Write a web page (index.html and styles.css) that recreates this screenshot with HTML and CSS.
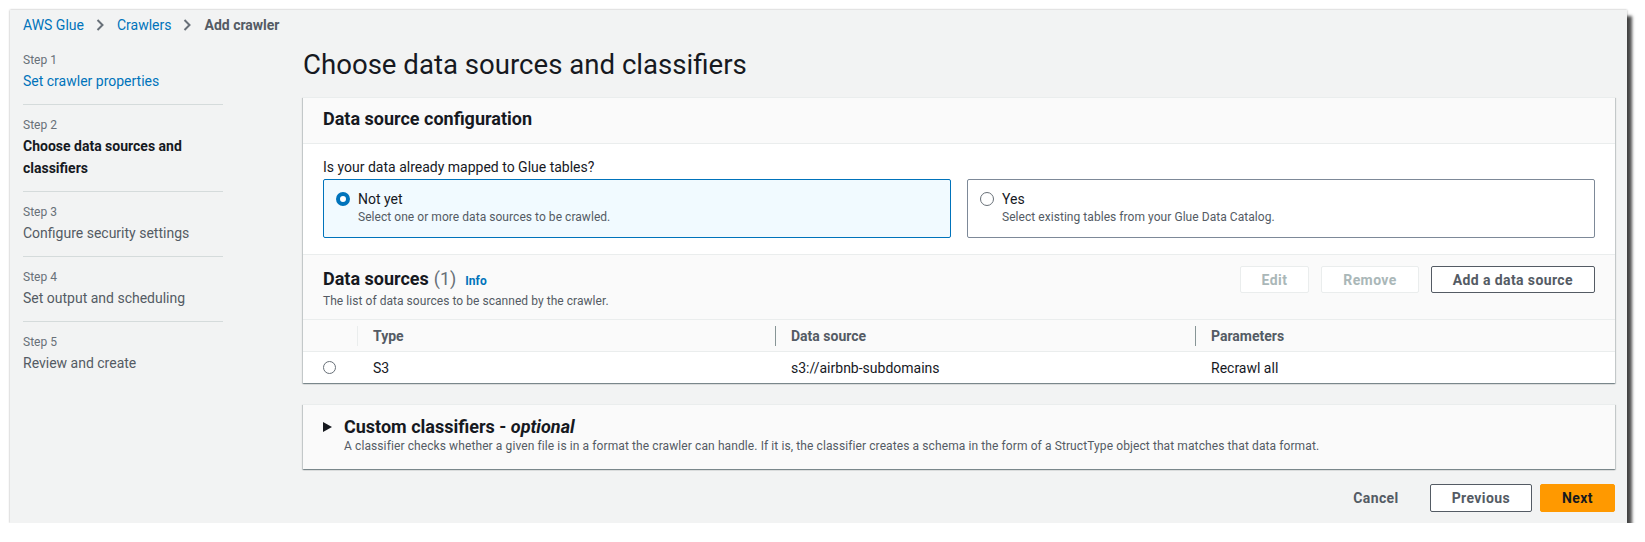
FILE: index.html
```html
<!DOCTYPE html>
<html lang="en">
<head>
<meta charset="utf-8">
<title>Add crawler</title>
<link rel="stylesheet" href="styles.css">
</head>
<body>
<div class="frame">
  <nav class="crumbs">
    <a class="crumb-link">AWS Glue</a>
    <svg class="chev" width="8" height="12" viewBox="0 0 8 12"><path d="M1.5 1l5 5-5 5" fill="none" stroke="#687078" stroke-width="2"/></svg>
    <a class="crumb-link">Crawlers</a>
    <svg class="chev" width="8" height="12" viewBox="0 0 8 12"><path d="M1.5 1l5 5-5 5" fill="none" stroke="#687078" stroke-width="2"/></svg>
    <span class="crumb-current">Add crawler</span>
  </nav>
  <div class="layout">
    <aside class="steps">
      <div class="step">
        <div class="step-label">Step 1</div>
        <a class="step-link">Set crawler properties</a>
      </div>
      <div class="step">
        <div class="step-label">Step 2</div>
        <div class="step-current">Choose data sources and classifiers</div>
      </div>
      <div class="step">
        <div class="step-label">Step 3</div>
        <div class="step-text">Configure security settings</div>
      </div>
      <div class="step">
        <div class="step-label">Step 4</div>
        <div class="step-text">Set output and scheduling</div>
      </div>
      <div class="step last">
        <div class="step-label">Step 5</div>
        <div class="step-text">Review and create</div>
      </div>
    </aside>
    <main class="main">
      <h1 class="title">Choose data sources and classifiers</h1>
      <section class="panel">
        <div class="panel-head">
          <h2 class="panel-title">Data source configuration</h2>
        </div>
        <div class="panel-body">
          <div class="q-label">Is your data already mapped to Glue tables?</div>
          <div class="tiles">
            <div class="tile selected">
              <span class="radio on"></span>
              <div class="tile-text">
                <div class="tile-title">Not yet</div>
                <div class="tile-sub">Select one or more data sources to be crawled.</div>
              </div>
            </div>
            <div class="tile">
              <span class="radio"></span>
              <div class="tile-text">
                <div class="tile-title">Yes</div>
                <div class="tile-sub">Select existing tables from your Glue Data Catalog.</div>
              </div>
            </div>
          </div>
        </div>
        <div class="ds-head">
          <div class="ds-left">
            <div class="ds-title"><span class="ds-name">Data sources</span> <span class="ds-count">(1)</span><a class="info">Info</a></div>
            <div class="ds-sub">The list of data sources to be scanned by the crawler.</div>
          </div>
          <div class="ds-actions">
            <button class="btn disabled">Edit</button>
            <button class="btn disabled">Remove</button>
            <button class="btn">Add a data source</button>
          </div>
        </div>
        <div class="table">
          <div class="th th-sel"></div>
          <div class="th"><span class="sep light"></span><span class="th-text">Type</span></div>
          <div class="th"><span class="sep"></span><span class="th-text">Data source</span></div>
          <div class="th"><span class="sep"></span><span class="th-text">Parameters</span></div>
          <div class="td td-sel"><span class="radio small"></span></div>
          <div class="td">S3</div>
          <div class="td">s3://airbnb-subdomains</div>
          <div class="td">Recrawl all</div>
        </div>
      </section>
      <section class="panel expander">
        <div class="exp-row">
          <svg class="caret" width="9" height="10" viewBox="0 0 9 10"><path d="M0 0L9 5 0 10z" fill="#16191f"/></svg>
          <div class="exp-text">
            <div class="exp-title">Custom classifiers - <em>optional</em></div>
            <div class="exp-sub">A classifier checks whether a given file is in a format the crawler can handle. If it is, the classifier creates a schema in the form of a StructType object that matches that data format.</div>
          </div>
        </div>
      </section>
      <div class="footer">
        <button class="btn link">Cancel</button>
        <button class="btn">Previous</button>
        <button class="btn primary">Next</button>
      </div>
    </main>
  </div>
</div>
</body>
</html>
```

FILE: styles.css
```css
* { box-sizing: border-box; }
html, body { margin: 0; padding: 0; background: #ffffff; }
body { font-family: Roboto, "Liberation Sans", Arial, sans-serif; color: #16191f; font-size: 14px; line-height: 20px; }

.frame {
  margin: 10px 0 0 10px;
  width: 1617px;
  height: 513px;
  background: #f2f3f3;
  padding: 5px 12px 0 13px;
  box-shadow: 0 0 2px rgba(0,0,0,0.35), 5px 6px 3px rgba(0,0,0,0.7);
}

.crumbs { display: flex; align-items: center; height: 20px; font-size: 14px; }
.crumb-link { color: #0073bb; }
.chev { margin: 0 13px 0 12px; }
.crumb-current { color: #545b64; font-weight: 700; }

.layout { display: flex; gap: 80px; }
.steps { width: 200px; flex: none; padding-top: 17px; }
.step { padding: 12px 0; border-bottom: 1px solid #d5dbdb; }
.step:first-child { padding-top: 0; }
.step.last { border-bottom: none; }
.step-label { font-size: 12px; line-height: 16px; color: #687078; margin-bottom: 2px; }
.step-link { display: block; color: #0073bb; font-size: 14px; line-height: 22px; }
.step-current { font-weight: 700; font-size: 14px; line-height: 22px; color: #16191f; }
.step-text { font-size: 14px; line-height: 22px; color: #545b64; }

.main { flex: 1; min-width: 0; }
.title { margin: 12px 0 0; font-size: 27.6px; line-height: 36px; font-weight: 400; color: #16191f; }

.panel {
  background: #ffffff;
  border-top: 1px solid #eaeded;
  box-shadow: 0 1px 1px 0 rgba(0,28,36,0.3), 1px 1px 1px 0 rgba(0,28,36,0.15), -1px 1px 1px 0 rgba(0,28,36,0.15);
  margin-top: 14px;
}
.panel-head { background: #fafafa; padding: 9px 20px 12px; border-bottom: 1px solid #eaeded; }
.panel-title { margin: 0; font-size: 18px; line-height: 24px; font-weight: 700; }
.panel-body { padding: 13px 20px 16px; border-bottom: 1px solid #eaeded; }
.q-label { font-size: 14px; line-height: 21px; margin-bottom: 1px; }
.tiles { display: flex; gap: 16px; }
.tile { flex: 1; display: flex; gap: 8px; border: 1px solid #7d8998; border-radius: 2px; padding: 9px 12px 11px; background: #fff; }
.tile.selected { border-color: #0073bb; background: #f1faff; }
.tile-title { font-size: 14px; line-height: 20px; }
.tile-sub { font-size: 12px; line-height: 17px; color: #545b64; letter-spacing: 0.05px; }
.radio { flex: none; width: 14px; height: 14px; border-radius: 50%; border: 1.5px solid #687078; background: #fff; margin-top: 3px; }
.radio.on { border: 4px solid #0073bb; }
.radio.small { margin-top: 0; width: 13px; height: 13px; }

.ds-head { background: #fafafa; display: flex; justify-content: space-between; align-items: flex-start; padding: 12px 20px 10px; border-bottom: 1px solid #eaeded; }
.ds-title { font-size: 18px; line-height: 24px; display: flex; align-items: baseline; }
.ds-name { font-weight: 700; }
.ds-count { color: #687078; margin-left: 5px; }
.info { color: #0073bb; font-size: 12px; font-weight: 700; margin-left: 9px; }
.ds-sub { font-size: 12px; line-height: 16px; color: #545b64; letter-spacing: 0.05px; }
.ds-actions { display: flex; gap: 12px; margin-top: -1px; }

.btn {
  font-family: Roboto, "Liberation Sans", Arial, sans-serif;
  font-size: 14px; font-weight: 700; line-height: 20px; letter-spacing: 0.4px;
  height: 27px; padding: 0 21px;
  border: 1px solid #545b64; border-radius: 2px;
  background: #fff; color: #545b64;
}
.btn.disabled { border-color: #eaeded; color: #aab7b8; }
.btn.link { border-color: transparent; background: transparent; padding: 0 22px 0 20px; }
.btn.primary { background: #ff9900; border-color: #ff9900; color: #16191f; }

.table { display: grid; grid-template-columns: 54px 418px 420px 1fr; }
.th { background: #fafafa; height: 32px; display: flex; align-items: center; border-bottom: 1px solid #eaeded; font-weight: 700; color: #545b64; }
.sep { width: 1px; height: 20px; background: #879596; }
.sep.light { background: #eaeded; }
.th-text { margin-left: 15px; }
.td { height: 31px; display: flex; align-items: center; padding-left: 16px; color: #16191f; }
.td-sel { padding-left: 20px; }

.expander { background: #fafafa; margin-top: 21px; }
.exp-row { display: flex; padding: 11px 20px 14px; }
.caret { flex: none; margin: 6px 12px 0 0; }
.exp-title { font-size: 18px; line-height: 22px; font-weight: 700; }
.exp-title em { font-weight: 700; }
.exp-sub { font-size: 12px; line-height: 17px; color: #545b64; letter-spacing: 0.1px; }

.footer { display: flex; justify-content: flex-end; gap: 8px; margin-top: 15px; }
.footer .btn { height: 28px; }
```
